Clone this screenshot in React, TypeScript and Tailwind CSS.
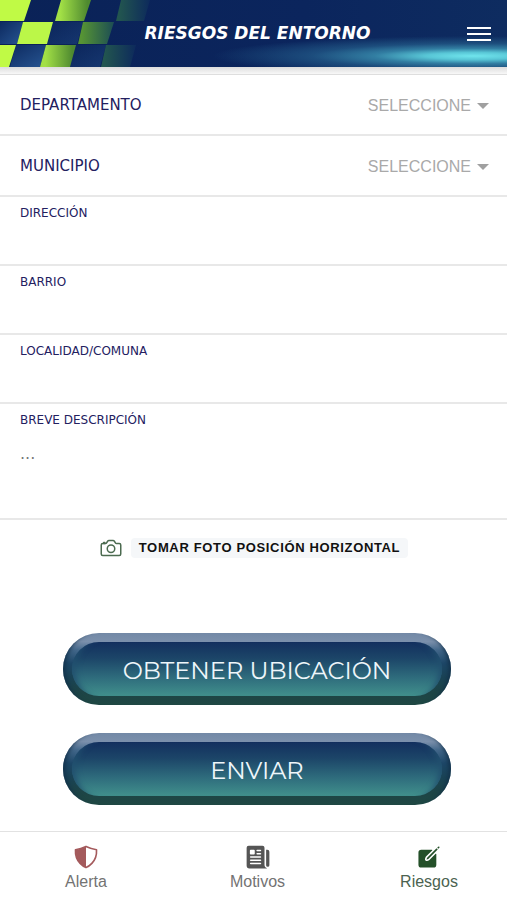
import React, { useState } from 'react';
import { IoCameraOutline, IoCreate, IoNewspaper, IoShieldHalf } from 'react-icons/io5';

interface FieldProps {
  id: string;
  label: string;
}

const SelectRow: React.FC<FieldProps> = ({ id, label }) => (
  <div className="flex h-[61px] items-center justify-between border-b-2 border-[#e8e8e8] pl-5 pr-4.5">
    <label htmlFor={id} className="pt-0.5 text-[15px] text-[#23205f]">
      {label}
    </label>
    <div className="flex items-center gap-1.5 pt-0.5">
      <select
        id={id}
        className="field-sizing-content appearance-none bg-transparent font-['Liberation_Sans',sans-serif] text-base text-[#a9a9a9] outline-none"
      >
        <option>SELECCIONE</option>
      </select>
      <svg width="12" height="6" viewBox="0 0 12 6" fill="#a0a0a0" aria-hidden="true">
        <path d="M0 0h12L6 6z" />
      </svg>
    </div>
  </div>
);

const TextRow: React.FC<FieldProps> = ({ id, label }) => (
  <div className="flex h-[69px] flex-col border-b-2 border-[#e8e8e8] px-5 pt-1.5">
    <label htmlFor={id} className="text-xs leading-5 text-[#23205f]">
      {label}
    </label>
    <input id={id} type="text" className="w-full flex-1 bg-transparent text-base outline-none" />
  </div>
);

const PillButton: React.FC<{ children: React.ReactNode }> = ({ children }) => (
  <button
    type="button"
    className="flex h-[72px] w-full rounded-full bg-[linear-gradient(180deg,#7389a6_0%,#7b90ac_12%,#42678a_24%,#1d4768_42%,#1a4355_62%,#1d4446_82%,#1f4843_100%)] p-[9px] shadow-[inset_8px_0_5px_-6px_#123049,inset_-8px_0_5px_-6px_#123049]"
  >
    <span className="flex h-full w-full items-center justify-center rounded-full bg-[linear-gradient(180deg,#13305f_0%,#1c4568_30%,#2e6b7c_65%,#41908c_100%)] pt-1 font-['Montserrat','Inter',sans-serif] text-2xl text-[#eef6fa] shadow-[inset_10px_0_6px_-7px_#22506f,inset_-10px_0_6px_-7px_#22506f]">
      {children}
    </span>
  </button>
);

const Checkers = () => (
  <svg
    className="absolute left-0 top-0"
    width="170"
    height="67"
    viewBox="0 0 170 67"
    aria-hidden="true"
  >
    <defs>
      <linearGradient id="blue" x1="0" y1="0" x2="1" y2="1">
        <stop offset="0" stopColor="#0d2a60" />
        <stop offset="1" stopColor="#275592" />
      </linearGradient>
      <linearGradient id="mid" x1="0" y1="0" x2="1" y2="0">
        <stop offset="0.15" stopColor="#a2e046" />
        <stop offset="0.9" stopColor="#4f8a30" />
      </linearGradient>
      <linearGradient id="green" x1="0" y1="0" x2="1" y2="0">
        <stop offset="0.1" stopColor="#569434" />
        <stop offset="1" stopColor="#1c4d54" />
      </linearGradient>
      <linearGradient id="faint" x1="0" y1="0" x2="1" y2="0">
        <stop offset="0.1" stopColor="#22554f" />
        <stop offset="1" stopColor="#0d2a5c" />
      </linearGradient>
    </defs>
    <path d="M0 22H23L17 44H0z" fill="url(#blue)" />
    <path d="M16 45H46L40 67H10z" fill="url(#blue)" />
    <path d="M53 22H83L77 44H47z" fill="url(#blue)" opacity="0.4" />
    <path d="M76 45H106L100 67H70z" fill="url(#blue)" opacity="0.4" />
    <path d="M0 0H31L24 21H0z" fill="#c0fa45" />
    <path d="M23 22H53L47 44H17z" fill="#bbf748" />
    <path d="M0 45H16L9 67H0z" fill="#c0fa45" />
    <path d="M61 0H91L84 21H55z" fill="url(#mid)" />
    <path d="M46 45H76L70 67H40z" fill="url(#mid)" />
    <path d="M83 22H114L107 44H78z" fill="url(#green)" />
    <path d="M121 0H150L144 21H116z" fill="url(#faint)" />
    <path d="M106 45H136L130 67H101z" fill="url(#faint)" />
  </svg>
);

const tabs = [
  {
    label: 'Alerta',
    icon: IoShieldHalf,
    iconColor: '-scale-x-100 text-[#a45a5c]',
    color: 'text-[#737373]',
  },
  { label: 'Motivos', icon: IoNewspaper, iconColor: 'text-[#555555]', color: 'text-[#737373]' },
  { label: 'Riesgos', icon: IoCreate, iconColor: 'text-[#245029]', color: 'text-[#4b6350]' },
];

export default function App() {
  const [description, setDescription] = useState('');

  return (
    <div className="flex min-h-screen flex-col bg-white font-['Verdana','DejaVu_Sans',sans-serif]">
      {/* Header */}
      <header className="relative h-[67px] bg-[radial-gradient(ellipse_260px_20px_at_calc(100%_-_34px)_56px,#70e5ed_0%,#58c6d6_18%,#3b93b3cc_38%,#2d739c80_62%,#0b255d00_100%),linear-gradient(90deg,#0a2257_0%,#0b255d_60%,#0e2c60_100%)]">
        <Checkers />
        <div className="relative grid h-full grid-cols-[1fr_auto_1fr] items-center pl-6 pr-4">
          <h1 className="col-start-2 text-[17px] font-bold italic text-white">
            RIESGOS DEL ENTORNO
          </h1>
          <button type="button" aria-label="Menú" className="justify-self-end">
            <svg width="24" height="14" viewBox="0 0 24 14" stroke="#fff" strokeWidth="2">
              <path d="M0 1h24M0 7h24M0 13h24" />
            </svg>
          </button>
        </div>
      </header>
      <div className="h-2 border-b border-[#dedede] bg-linear-to-b from-[#dddddd] to-[#f8f8f8]" />

      {/* Form */}
      <form className="flex flex-col" onSubmit={(e) => e.preventDefault()}>
        <SelectRow id="departamento" label="DEPARTAMENTO" />
        <SelectRow id="municipio" label="MUNICIPIO" />
        <TextRow id="direccion" label="DIRECCIÓN" />
        <TextRow id="barrio" label="BARRIO" />
        <TextRow id="localidad" label="LOCALIDAD/COMUNA" />
        <div className="flex h-[116px] flex-col border-b-2 border-[#e8e8e8] px-5 pt-1.5">
          <label htmlFor="descripcion" className="text-xs leading-5 text-[#23205f]">
            BREVE DESCRIPCIÓN
          </label>
          <textarea
            id="descripcion"
            placeholder="..."
            value={description}
            onChange={(e) => setDescription(e.target.value)}
            className="w-full flex-1 resize-none bg-transparent pt-3 text-base leading-6 outline-none placeholder:text-[#777777]"
          />
        </div>

        <button
          type="button"
          className="mt-4 flex items-center gap-2 self-center font-['Liberation_Sans',sans-serif]"
        >
          <IoCameraOutline size={24} className="text-[#4c6b50]" />
          <span className="rounded bg-[#f5f7f9] px-2 text-[13px] font-bold leading-5 tracking-wider text-[#111111]">
            TOMAR FOTO POSICIÓN HORIZONTAL
          </span>
        </button>

        <div className="mt-[73px] flex flex-col gap-7 pl-[63px] pr-14">
          <PillButton>OBTENER UBICACIÓN</PillButton>
          <PillButton>ENVIAR</PillButton>
        </div>
      </form>

      {/* Bottom tabs */}
      <nav className="mt-auto flex h-[69px] justify-between border-t border-[#e2e2e2] pl-14 pr-12 pt-3 font-['Liberation_Sans',sans-serif]">
        {tabs.map(({ label, icon: Icon, iconColor, color }) => (
          <a key={label} href="#" className={`flex w-15 flex-col items-center ${color}`}>
            <Icon size={26} className={iconColor} />
            <span className="text-base leading-6">{label}</span>
          </a>
        ))}
      </nav>
    </div>
  );
}
